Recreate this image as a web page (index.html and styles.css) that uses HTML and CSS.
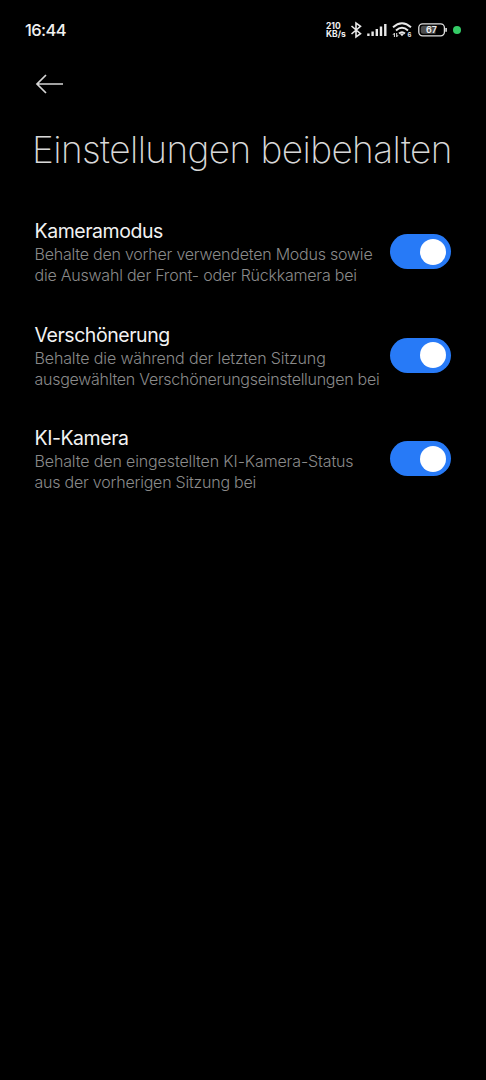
FILE: index.html
```
<!DOCTYPE html>
<html lang="de">
<head>
    <meta charset="UTF-8">
    <meta name="viewport" content="width=device-width, initial-scale=1.0">
    <title>Einstellungen beibehalten</title>
    <link rel="stylesheet" href="styles.css">
</head>
<body>
    <div class="statusbar">
        <div class="time">16:44</div>
        <div class="status-icons">
            <div class="speed">210<br>KB/s</div>
            <svg class="bluetooth" width="12" height="18" viewBox="0 0 12 18">
                <path d="M1.5 5 L10.5 12.7 L6 16 V2 L10.5 5.3 L1.5 13" fill="none" stroke="#e8e8e8" stroke-width="1.6"/>
            </svg>
            <svg class="signal" width="20" height="14" viewBox="0 0 20 14">
                <path d="M1.4 10.5V13M5.6 8.5V13M9.8 6V13M14 3.5V13M18.3 1V13" stroke="#e8e8e8" stroke-width="2.4" stroke-linecap="butt"/>
            </svg>
            <svg class="wifi" width="20" height="16" viewBox="0 0 20 16">
                <path d="M1 5.3Q10-2.7 19 5.3M4 8.5Q10 3.1 16 8.5M7 11.5Q10 8.9 13 11.5" fill="none" stroke="#e8e8e8" stroke-width="1.9"/>
                <path d="M7.6 11.4H12.4L10 14.2Z" fill="#e8e8e8"/>
                <path d="M2.4 15V11.2L1 12.8M4.7 11V14.8L6 13.2" fill="none" stroke="#e8e8e8" stroke-width="1"/>
                <text class="wifi-gen" x="15.4" y="15.4">6</text>
            </svg>
            <svg class="battery" width="30" height="14" viewBox="0 0 30 14">
                <rect x="0.8" y="0.8" width="25.6" height="12" rx="3.8" fill="none" stroke="#e0e0e0" stroke-width="1.3"/>
                <path d="M5 2.8H17.5V10.8H5Q2.8 10.8 2.8 8.6V5Q2.8 2.8 5 2.8Z" fill="#4c4c4c"/>
                <path d="M28.1 5V8.8" stroke="#e0e0e0" stroke-width="1.6"/>
                <text class="battery-level" x="13.4" y="10.2">67</text>
            </svg>
            <div class="dot"></div>
        </div>
    </div>

    <div class="toolbar">
        <svg class="back" width="30" height="20" viewBox="0 0 30 20">
            <path d="M28 10H2M11 1L2 10L11 19" fill="none" stroke="#d6d6d6" stroke-width="1.7"/>
        </svg>
    </div>

    <h1>Einstellungen beibehalten</h1>

    <div class="settings">
        <div class="setting">
            <div class="label">
                <h2>Kameramodus</h2>
                <p>Behalte den vorher verwendeten Modus sowie<br>die Auswahl der Front- oder Rückkamera bei</p>
            </div>
            <div class="switch"></div>
        </div>
        <div class="setting">
            <div class="label">
                <h2>Verschönerung</h2>
                <p><span class="wide">Behalte die während der letzten Sitzung</span><br><span class="tight">ausgewählten Verschönerungseinstellungen bei</span></p>
            </div>
            <div class="switch"></div>
        </div>
        <div class="setting">
            <div class="label">
                <h2>KI-Kamera</h2>
                <p><span class="wide">Behalte den eingestellten KI-Kamera-Status</span><br>aus der vorherigen Sitzung bei</p>
            </div>
            <div class="switch"></div>
        </div>
    </div>
</body>
</html>
```
FILE: styles.css
```
body {
    margin: 0;
    min-height: 1080px;
    background-color: #000;
    color: #f0f0f0;
    font-family: Inter, "Noto Sans", sans-serif;
}
.statusbar {
    display: flex;
    justify-content: space-between;
    align-items: center;
    height: 60px;
    padding: 0 25px;
}
.time {
    font-size: 16.5px;
    font-weight: 500;
    letter-spacing: -0.6px;
}
.status-icons {
    display: flex;
    align-items: center;
}
.speed {
    font-size: 8.5px;
    font-weight: 700;
    line-height: 8px;
    width: 24px;
    white-space: nowrap;
}
.signal {
    margin-left: 5px;
}
.wifi {
    margin-left: 5px;
}
.wifi-gen {
    font-size: 6px;
    font-weight: 700;
    fill: #e8e8e8;
}
.battery {
    margin-left: 6px;
}
.battery-level {
    font-size: 9px;
    font-weight: 600;
    text-anchor: middle;
    fill: #f0f0f0;
}
.dot {
    width: 8px;
    height: 8px;
    margin-left: 5px;
    border-radius: 50%;
    background-color: #35cc67;
}
.toolbar {
    display: flex;
    align-items: center;
    height: 48px;
    padding-left: 35px;
}
h1 {
    margin: 19px 0 0 32px;
    font-size: 37px;
    font-weight: 200;
    line-height: 46px;
    letter-spacing: -0.6px;
    white-space: nowrap;
    color: #d8d8d8;
}
.settings {
    display: flex;
    flex-direction: column;
    gap: 36.5px;
    padding: 46px 35px 0 34.5px;
}
.setting {
    display: flex;
    justify-content: space-between;
    height: 67px;
}
.label {
    white-space: nowrap;
}
h2 {
    margin: 0 0 1px;
    font-size: 19.5px;
    font-weight: 400;
    line-height: 24px;
    letter-spacing: -0.45px;
    color: #f2f2f2;
}
p {
    margin: 0;
    font-size: 16px;
    font-weight: 300;
    line-height: 21px;
    letter-spacing: -0.22px;
    color: #8a8a8a;
}
.wide {
    letter-spacing: -0.13px;
}
.tight {
    letter-spacing: -0.27px;
}
.switch {
    display: flex;
    justify-content: flex-end;
    align-items: center;
    flex-shrink: 0;
    box-sizing: border-box;
    width: 61.5px;
    height: 35px;
    margin-top: 15px;
    padding-right: 5px;
    border-radius: 18px;
    background-color: #277af7;
}
.switch::after {
    content: "";
    width: 26px;
    height: 26px;
    border-radius: 50%;
    background-color: #fff;
}
```
